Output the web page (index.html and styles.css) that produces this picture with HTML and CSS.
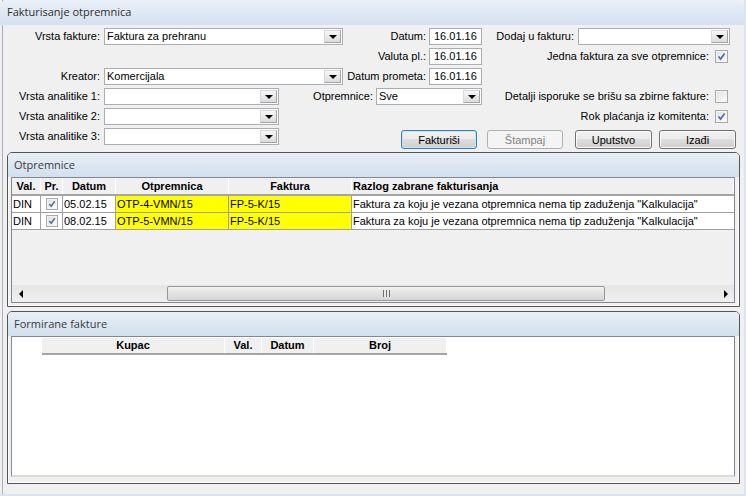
FILE: index.html
```html
<!DOCTYPE html>
<html lang="sr">
<head>
  <meta charset="UTF-8">
  <title>Fakturisanje otpremnica</title>
  <link rel="stylesheet" href="styles.css">
</head>
<body>
  <div class="window">
    <!-- Title -->
    <div class="titlebar">Fakturisanje otpremnica</div>

    <!-- Filter form -->
    <div class="form">
      <div class="row">
        <div class="cell-a">
          <span class="lbl">Vrsta fakture:</span>
          <div class="combo w-wide"><span class="val">Faktura za prehranu</span><span class="drop"></span></div>
        </div>
        <div class="cell-b">
          <span class="lbl-r">Datum:</span>
          <div class="edit">16.01.16</div>
        </div>
        <div class="cell-c">
          <span class="lbl-c">Dodaj u fakturu:</span>
          <div class="combo w-add"><span class="val"></span><span class="drop"></span></div>
        </div>
      </div>

      <div class="row">
        <div class="cell-a"></div>
        <div class="cell-b">
          <span class="lbl-r">Valuta pl.:</span>
          <div class="edit">16.01.16</div>
        </div>
        <div class="cell-c chk-cell">
          <span class="lbl-c">Jedna faktura za sve otpremnice:</span>
          <span class="chk on"><svg viewBox="0 0 11 11"><path d="M2.5 5.5 L4.6 8 L8.6 2.4"/></svg></span>
        </div>
      </div>

      <div class="row">
        <div class="cell-a">
          <span class="lbl">Kreator:</span>
          <div class="combo w-wide"><span class="val">Komercijala</span><span class="drop"></span></div>
        </div>
        <div class="cell-b">
          <span class="lbl-r">Datum prometa:</span>
          <div class="edit">16.01.16</div>
        </div>
        <div class="cell-c"></div>
      </div>

      <div class="row">
        <div class="cell-a short">
          <span class="lbl">Vrsta analitike 1:</span>
          <div class="combo w-short"><span class="val"></span><span class="drop"></span></div>
        </div>
        <div class="cell-b wide">
          <span class="lbl-r">Otpremnice:</span>
          <div class="combo w-otp"><span class="val">Sve</span><span class="drop"></span></div>
        </div>
        <div class="cell-c chk-cell">
          <span class="lbl-c">Detalji isporuke se brišu sa zbirne fakture:</span>
          <span class="chk"></span>
        </div>
      </div>

      <div class="row">
        <div class="cell-a short">
          <span class="lbl">Vrsta analitike 2:</span>
          <div class="combo w-short"><span class="val"></span><span class="drop"></span></div>
        </div>
        <div class="cell-b wide"></div>
        <div class="cell-c chk-cell">
          <span class="lbl-c">Rok plaćanja iz komitenta:</span>
          <span class="chk on"><svg viewBox="0 0 11 11"><path d="M2.5 5.5 L4.6 8 L8.6 2.4"/></svg></span>
        </div>
      </div>

      <div class="row">
        <div class="cell-a short">
          <span class="lbl">Vrsta analitike 3:</span>
          <div class="combo w-short"><span class="val"></span><span class="drop"></span></div>
        </div>
        <div class="buttons">
          <button class="btn default">Fakturiši</button>
          <button class="btn disabled">Štampaj</button>
          <button class="btn">Uputstvo</button>
          <button class="btn">Izađi</button>
        </div>
      </div>
    </div>

    <!-- Otpremnice -->
    <div class="panel">
      <div class="panel-head">Otpremnice</div>
      <div class="panel-body">
        <div class="grid grid-otp">
          <div class="thead">
            <div class="th">Val.</div>
            <div class="th">Pr.</div>
            <div class="th">Datum</div>
            <div class="th">Otpremnica</div>
            <div class="th">Faktura</div>
            <div class="th left">Razlog zabrane fakturisanja</div>
          </div>
          <div class="tr">
            <div class="td">DIN</div>
            <div class="td center"><span class="chk small on"><svg viewBox="0 0 11 11"><path d="M2.5 5.5 L4.6 8 L8.6 2.4"/></svg></span></div>
            <div class="td">05.02.15</div>
            <div class="td yellow">OTP-4-VMN/15</div>
            <div class="td yellow">FP-5-K/15</div>
            <div class="td">Faktura za koju je vezana otpremnica nema tip zaduženja "Kalkulacija"</div>
          </div>
          <div class="tr">
            <div class="td">DIN</div>
            <div class="td center"><span class="chk small on"><svg viewBox="0 0 11 11"><path d="M2.5 5.5 L4.6 8 L8.6 2.4"/></svg></span></div>
            <div class="td">08.02.15</div>
            <div class="td yellow">OTP-5-VMN/15</div>
            <div class="td yellow">FP-5-K/15</div>
            <div class="td">Faktura za koju je vezana otpremnica nema tip zaduženja "Kalkulacija"</div>
          </div>
          <div class="filler"></div>
          <div class="hscroll">
            <span class="arrow"><span class="tri-left"></span></span>
            <div class="track"><div class="thumb"><span class="grip"></span></div></div>
            <span class="arrow"><span class="tri-right"></span></span>
          </div>
        </div>
      </div>
    </div>

    <!-- Formirane fakture -->
    <div class="panel second">
      <div class="panel-head">Formirane fakture</div>
      <div class="panel-body">
        <div class="grid grid-fak">
          <div class="thead">
            <div class="th">Kupac</div>
            <div class="th">Val.</div>
            <div class="th">Datum</div>
            <div class="th">Broj</div>
          </div>
        </div>
      </div>
    </div>
  </div>
</body>
</html>
```

FILE: styles.css
```css
/* Reset */
* {
  margin: 0;
  padding: 0;
  box-sizing: border-box;
}

body {
  font-family: "Liberation Sans", Arial, sans-serif;
  font-size: 11px;
  color: #000;
  background-color: #f0f0f0;
}

/* Window frame */
.window {
  width: 746px;
  height: 496px;
  overflow: hidden;
  background-color: #f0f0f0;
  border-right: 2px solid #dbe5f1;
  border-bottom: 2px solid #dbe5f1;
  box-shadow: inset 2px 0 0 #f0f0f0, inset 3px 0 0 #a9b0b8;
}

.titlebar {
  height: 25px;
  line-height: 24px;
  padding-left: 7px;
  font-family: "Open Sans", "Liberation Sans", sans-serif;
  font-size: 11px;
  color: #2e2e2e;
  background: linear-gradient(#e9f0f8, #d4e1ef);
  border-top-left-radius: 6px;
  border-top-right-radius: 6px;
}

/* Form rows */
.form {
  height: 127px;
  padding-top: 3px;
}

.row {
  display: flex;
  height: 17px;
  margin-bottom: 3px;
}

.cell-a {
  width: 343px;
  display: flex;
}

.cell-a.short {
  width: 279px;
}

.cell-b {
  width: 139px;
  display: flex;
}

.cell-b.wide {
  width: 203px;
}

.cell-c {
  width: 248px;
  display: flex;
  justify-content: flex-end;
  align-items: center;
  gap: 4px;
}

.cell-c.chk-cell {
  padding-right: 2px;
  gap: 6px;
}

.lbl {
  width: 104px;
  padding-right: 4px;
  text-align: right;
  line-height: 17px;
  white-space: nowrap;
}

.lbl-r {
  flex: 1;
  padding-right: 3px;
  text-align: right;
  line-height: 17px;
  white-space: nowrap;
}

.lbl-c {
  line-height: 17px;
  white-space: nowrap;
}

/* Combo box */
.combo {
  display: flex;
  height: 17px;
  border: 1px solid #abadb3;
  background-color: #fff;
  padding: 1px 0 1px 1px;
}

.combo .val {
  flex: 1;
  line-height: 13px;
  padding-left: 1px;
  white-space: nowrap;
}

.combo .drop {
  width: 17px;
  border: 1px solid #a3a3a3;
  border-top-color: #d8d8d8;
  border-left-color: #d8d8d8;
  background: linear-gradient(#f7f7f7, #dcdcdc);
  display: flex;
  justify-content: center;
  align-items: flex-end;
  padding-bottom: 3px;
  margin-right: 1px;
}

.combo .drop::after {
  content: "";
  border-left: 4px solid transparent;
  border-right: 4px solid transparent;
  border-top: 4px solid #000;
}

.w-wide { width: 239px; }
.w-short { width: 175px; }
.w-otp { width: 106px; }
.w-add { width: 152px; }

/* Date edit */
.edit {
  width: 53px;
  height: 17px;
  border: 1px solid #abadb3;
  background-color: #fff;
  padding-left: 4px;
  line-height: 15px;
}

/* Check box */
.chk {
  display: inline-block;
  width: 13px;
  height: 13px;
  border: 1px solid #a9a9a9;
  background: linear-gradient(135deg, #dedede, #ffffff);
  box-shadow: inset 0 0 0 1px #f4f4f4;
}

.chk svg {
  display: block;
  width: 11px;
  height: 11px;
}

.chk path {
  fill: none;
  stroke: #4f6eaa;
  stroke-width: 1.7;
}

.chk.small {
  width: 12px;
  height: 12px;
}

.chk.small svg {
  width: 10px;
  height: 10px;
}

/* Buttons */
.buttons {
  display: flex;
  margin-left: 122px;
  margin-top: 2px;
}

.btn {
  width: 76px;
  height: 19px;
  margin-right: 10px;
  border: 1px solid #707070;
  border-radius: 3px;
  background: linear-gradient(#f2f2f2 0%, #ebebeb 45%, #dddddd 50%, #cfcfcf 100%);
  box-shadow: inset 0 0 0 1px #fbfbfb;
  font-family: inherit;
  font-size: 11px;
  color: #000;
  line-height: 16px;
}

.btn:nth-child(3) {
  width: 77px;
  margin-left: 2px;
  margin-right: 7px;
}

.btn:last-child {
  width: 77px;
  margin-right: 0;
}

.btn.default {
  border-color: #3c7fb1;
  box-shadow: inset 0 0 0 1px #c4e5f6;
}

.btn.disabled {
  border-color: #adb2b5;
  background: #f4f4f4;
  box-shadow: none;
  color: #838383;
}

/* Group panels */
.panel {
  margin-left: 7px;
  width: 733px;
  border: 1px solid #555;
  border-radius: 5px 5px 0 0;
  background-color: #f0f0f0;
  box-shadow: inset 0 0 0 1px #fcfcfc;
}

.panel.second {
  margin-top: 4px;
}

.panel-head {
  height: 24px;
  line-height: 23px;
  padding-left: 6px;
  font-family: "Open Sans", "Liberation Sans", sans-serif;
  font-size: 11px;
  color: #3a3a3a;
  background: linear-gradient(#e8eff7, #d2dfed);
  border-radius: 4px 4px 0 0;
}

.panel-body {
  padding: 0 4px 3px 3px;
}

.panel.second .panel-body {
  padding-bottom: 6px;
}

/* Grids */
.grid {
  border: 1px solid #828790;
  display: flex;
  flex-direction: column;
}

.grid-otp {
  height: 126px;
  background-color: #f0f0f0;
}

.grid-fak {
  height: 141px;
  background-color: #fff;
  border-bottom: 2px solid #dcdad5;
}

.thead,
.tr {
  display: grid;
}

.grid-otp .thead,
.grid-otp .tr {
  grid-template-columns: 29px 22px 53px 113px 123px 1fr;
}

.thead {
  height: 18px;
  border-bottom: 2px solid #a5a5a5;
}

.th {
  background-color: #f0f0f0;
  border-right: 1px solid #fff;
  font-weight: bold;
  text-align: center;
  line-height: 16px;
  white-space: nowrap;
}

.th.left {
  text-align: left;
  padding-left: 1px;
}

.grid-fak .thead {
  width: 405px;
  height: 17px;
  margin-left: 30px;
  margin-top: 1px;
  grid-template-columns: 183px 37px 52px 133px;
}

.grid-fak .th {
  line-height: 15px;
}

.tr {
  height: 17px;
}

.td {
  background-color: #fff;
  border-right: 1px solid #a0a0a0;
  border-bottom: 1px solid #a0a0a0;
  padding-left: 1px;
  line-height: 16px;
  white-space: nowrap;
  overflow: hidden;
}

.td:last-child {
  border-right: none;
}

.td.center {
  display: flex;
  justify-content: center;
  align-items: center;
  padding-left: 0;
}

.td.yellow {
  background-color: #ffff00;
}

.filler {
  flex: 1;
}

/* Horizontal scroll bar */
.hscroll {
  height: 17px;
  display: flex;
  background: linear-gradient(#e6e6e6, #efefef);
}

.hscroll .arrow {
  width: 17px;
  display: flex;
  justify-content: center;
  align-items: center;
}

.tri-left {
  border-top: 4px solid transparent;
  border-bottom: 4px solid transparent;
  border-right: 4px solid #000;
}

.tri-right {
  border-top: 4px solid transparent;
  border-bottom: 4px solid transparent;
  border-left: 4px solid #000;
}

.track {
  flex: 1;
  padding: 1px 0;
}

.thumb {
  width: 438px;
  height: 15px;
  margin-left: 138px;
  border: 1px solid #979797;
  border-radius: 2px;
  background: linear-gradient(#f3f3f3, #e2e2e2 50%, #d6d6d6);
  display: flex;
  justify-content: center;
  align-items: center;
}

.grip {
  width: 7px;
  height: 7px;
  background: repeating-linear-gradient(to right, #6e6e6e 0, #6e6e6e 1px, #e8e8e8 1px, #e8e8e8 3px);
}
```
